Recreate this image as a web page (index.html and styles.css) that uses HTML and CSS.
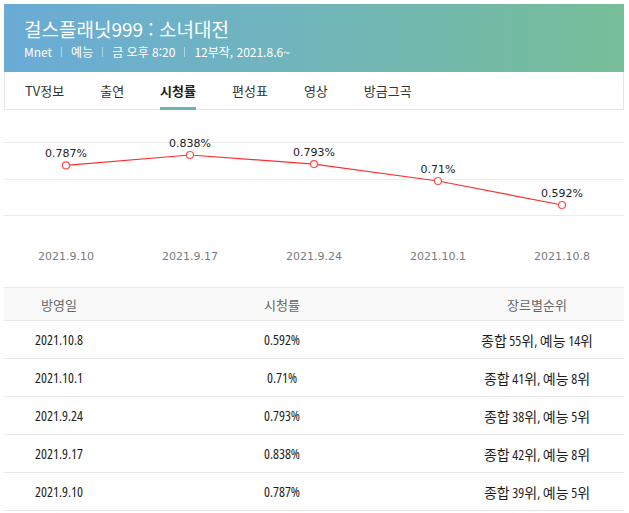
FILE: index.html
```html
<!DOCTYPE html>
<html lang="ko">
<head>
<meta charset="utf-8">
<title>걸스플래닛999 : 소녀대전 시청률</title>
<link rel="stylesheet" href="styles.css">
</head>
<body>
<div class="page">
  <header class="hero">
    <h1 class="title">걸스플래닛999 : 소녀대전</h1>
    <div class="meta">
      <span>Mnet</span><i class="sep"></i>
      <span>예능</span><i class="sep"></i>
      <span>금 오후 8:20</span><i class="sep"></i>
      <span>12부작, 2021.8.6~</span>
    </div>
  </header>
  <nav class="tabs">
    <a class="tab">TV정보</a>
    <a class="tab">출연</a>
    <a class="tab active">시청률</a>
    <a class="tab">편성표</a>
    <a class="tab">영상</a>
    <a class="tab">방금그곡</a>
  </nav>
  <svg class="chart" width="620" height="177" viewBox="0 0 620 177">
    <line class="grid" x1="0" x2="620" y1="32.5" y2="32.5"/>
    <line class="grid" x1="0" x2="620" y1="69.5" y2="69.5"/>
    <line class="grid" x1="0" x2="620" y1="105.5" y2="105.5"/>
    <polyline class="series" points="62,55.4 186,45 310,54.1 434,71 558,95"/>
    <circle class="dot" cx="62" cy="55.4" r="3.5"/>
    <circle class="dot" cx="186" cy="45" r="3.5"/>
    <circle class="dot" cx="310" cy="54.1" r="3.5"/>
    <circle class="dot" cx="434" cy="71" r="3.5"/>
    <circle class="dot" cx="558" cy="95" r="3.5"/>
    <text class="val" x="62" y="46.7">0.787%</text>
    <text class="val" x="186" y="36.5">0.838%</text>
    <text class="val" x="310" y="45.6">0.793%</text>
    <text class="val" x="434" y="62.5">0.71%</text>
    <text class="val" x="558" y="86.5">0.592%</text>
    <text class="axis" x="62" y="150">2021.9.10</text>
    <text class="axis" x="186" y="150">2021.9.17</text>
    <text class="axis" x="310" y="150">2021.9.24</text>
    <text class="axis" x="434" y="150">2021.10.1</text>
    <text class="axis" x="558" y="150">2021.10.8</text>
  </svg>
  <div class="table">
    <div class="row head"><span>방영일</span><span>시청률</span><span>장르별순위</span></div>
    <div class="row"><span>2021.10.8</span><span>0.592%</span><span>종합 55위, 예능 14위</span></div>
    <div class="row"><span>2021.10.1</span><span>0.71%</span><span>종합 41위, 예능 8위</span></div>
    <div class="row"><span>2021.9.24</span><span>0.793%</span><span>종합 38위, 예능 5위</span></div>
    <div class="row"><span>2021.9.17</span><span>0.838%</span><span>종합 42위, 예능 8위</span></div>
    <div class="row"><span>2021.9.10</span><span>0.787%</span><span>종합 39위, 예능 5위</span></div>
  </div>
</div>
</body>
</html>
```

FILE: styles.css
```css
html, body {
  margin: 0;
  padding: 0;
  background: #fff;
}
body {
  padding: 4px;
  font-family: "Noto Sans CJK KR", "Noto Sans", sans-serif;
}
.page {
  width: 620px;
}
.hero {
  height: 68px;
  box-sizing: border-box;
  padding: 11px 0 0 20px;
  background: linear-gradient(to right, #6aabd7, #70b5bd 45%, #77be99);
  color: #fff;
}
.title {
  margin: 0;
  font-size: 19px;
  font-weight: 400;
  line-height: 27px;
}
.meta {
  display: flex;
  align-items: center;
  margin-top: 1px;
  font-size: 12px;
  line-height: 18px;
}
.sep {
  width: 1px;
  height: 10px;
  margin: 0 9px;
  background: rgba(255, 255, 255, 0.45);
}
.tabs {
  display: flex;
  gap: 36px;
  height: 38px;
  box-sizing: border-box;
  padding-left: 20px;
  border: 1px solid #e6e6e6;
  border-top: 0;
}
.tab {
  display: flex;
  align-items: center;
  padding-top: 2px;
  margin-bottom: -1px;
  border-bottom: 3px solid transparent;
  font-size: 13px;
  color: #333;
}
.tab.active {
  font-weight: 700;
  color: #222;
  border-bottom-color: #6ab6b4;
}
.chart {
  display: block;
}
.grid {
  stroke: #ececec;
  stroke-width: 1;
}
.series {
  fill: none;
  stroke: #ff2e2e;
  stroke-width: 1.2;
}
.dot {
  fill: #fff;
  stroke: #ff4d4d;
  stroke-width: 1.2;
}
.val {
  font-family: "DejaVu Sans", sans-serif;
  font-size: 11px;
  fill: #222;
  text-anchor: middle;
}
.axis {
  font-family: "DejaVu Sans", sans-serif;
  font-size: 11px;
  fill: #7a7a7a;
  text-anchor: middle;
}
.table {
  border-top: 1px solid #ebebeb;
  font-family: "Open Sans", "Noto Sans CJK KR", sans-serif;
  font-stretch: 75%;
  font-size: 14px;
  color: #1e1e1e;
}
.row {
  display: grid;
  grid-template-columns: 110px 336px 1fr;
  height: 38px;
  box-sizing: border-box;
  align-items: center;
  text-align: center;
  border-bottom: 1px solid #e8e8e8;
}
.row.head {
  height: 33px;
  background: #f9f9f9;
  color: #666;
  font-size: 13px;
}
```
